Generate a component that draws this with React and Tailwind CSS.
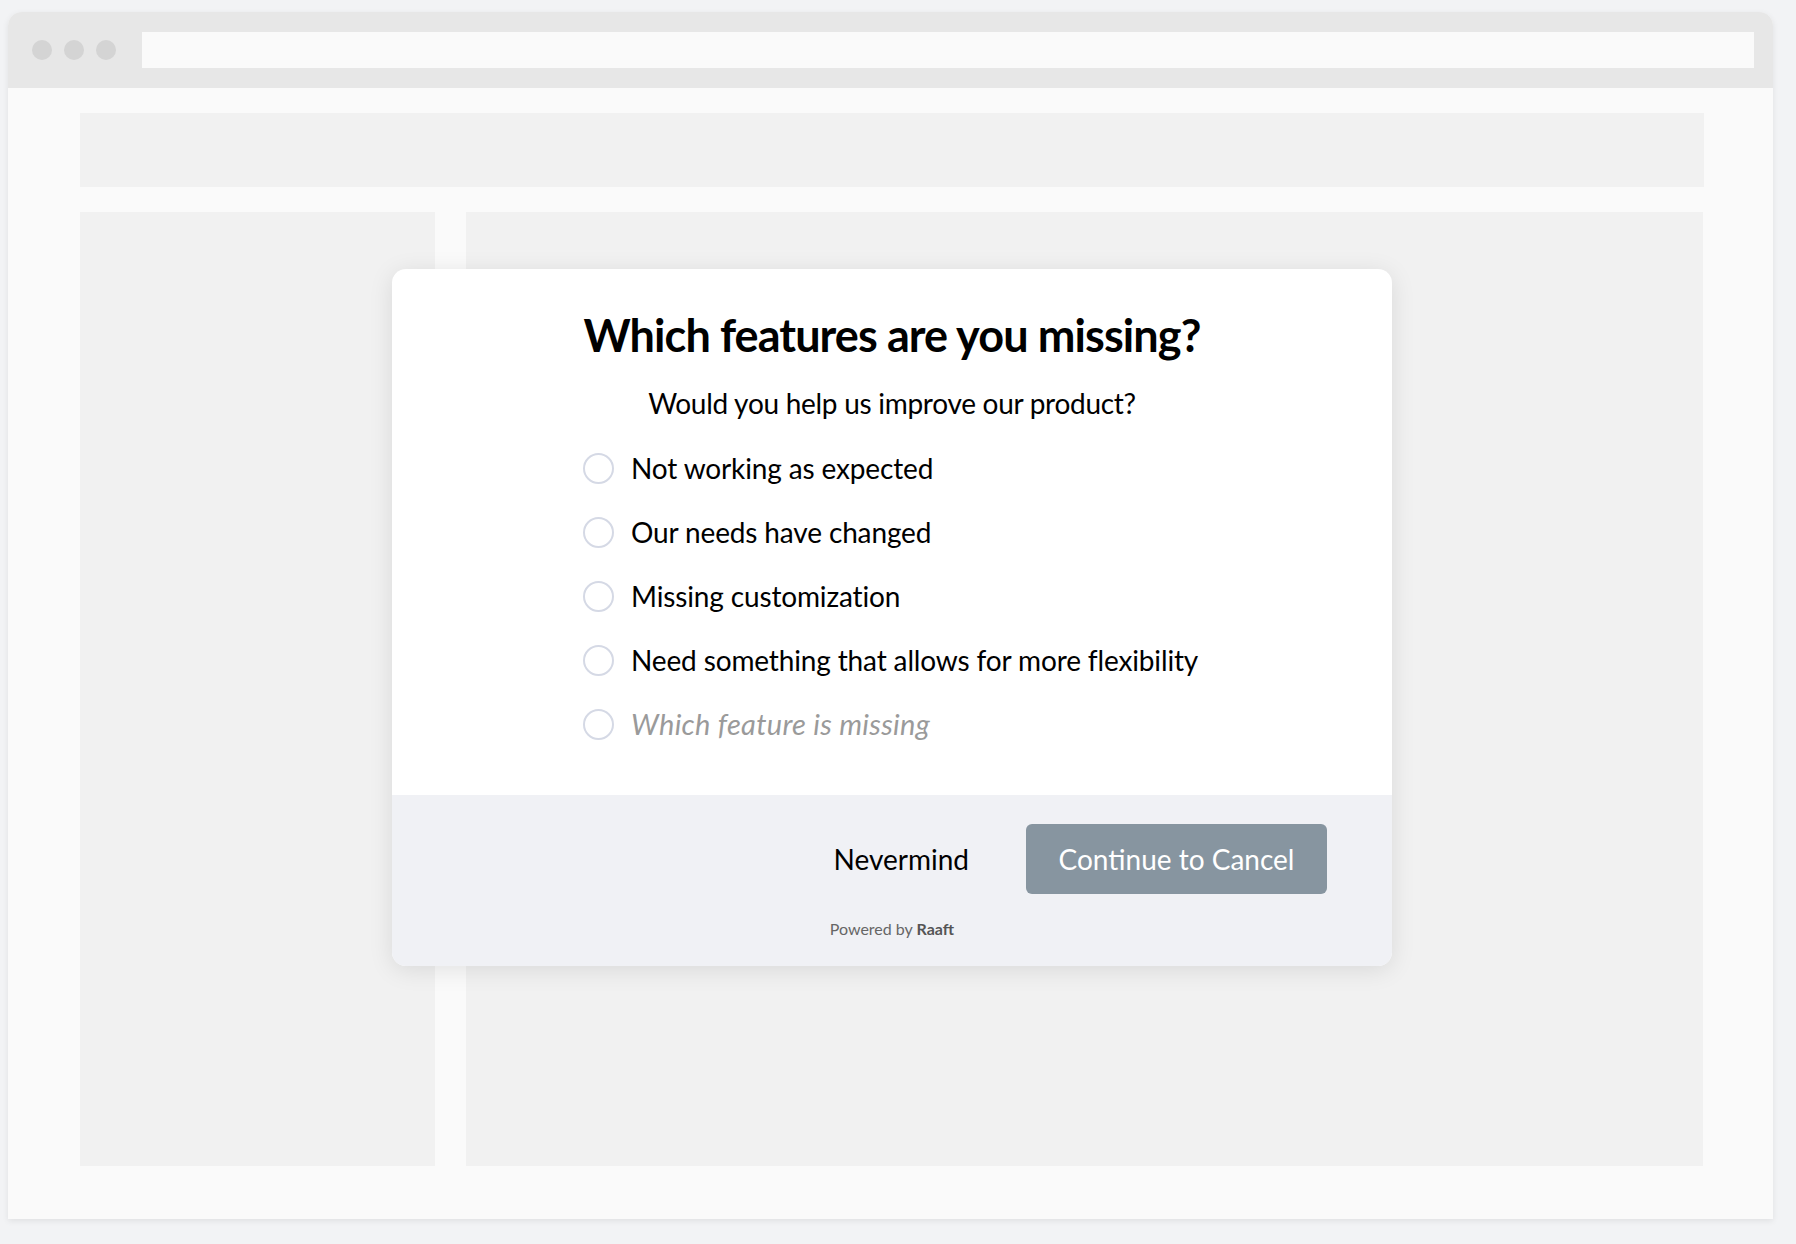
import React from 'react';

const OPTIONS = [
  'Not working as expected',
  'Our needs have changed',
  'Missing customization',
  'Need something that allows for more flexibility',
];

function Radio() {
  return <span className="w-[31px] h-[31px] rounded-full border-2 border-[#d5d9e5] bg-white shrink-0" />;
}

function CancelModal() {
  return (
    <div className="absolute left-[392px] top-[269px] w-[1000px] bg-white rounded-[14px] shadow-[0_4px_24px_rgba(0,0,0,0.10)] overflow-hidden">
      {/* Body */}
      <div className="pt-[38px] pb-[39px]">
        <div className="w-[618px] mx-auto">
          <h2 className="-mx-[60px] whitespace-nowrap text-[45px] leading-[56px] font-bold text-black text-center tracking-[-0.02em]">
            Which features are you missing?
          </h2>
          <p className="mt-[22px] -mx-[40px] whitespace-nowrap text-[28px] leading-[36px] text-black text-center tracking-[-0.01em]">
            Would you help us improve our product?
          </p>
          <ul className="mt-[15px]">
            {OPTIONS.map((opt) => (
              <li key={opt} className="h-[64px] flex items-center gap-[17px]">
                <Radio />
                <span className="whitespace-nowrap text-[28px] leading-[32px] text-black tracking-[-0.005em]">{opt}</span>
              </li>
            ))}
            <li className="h-[64px] flex items-center gap-[17px]">
              <Radio />
              <span className="whitespace-nowrap text-[29px] leading-[32px] italic text-[#9a9a9a] tracking-[0.01em]">Which feature is missing</span>
            </li>
          </ul>
        </div>
      </div>

      {/* Footer */}
      <div className="bg-[#f0f1f5] pt-[29px] pb-[27px]">
        <div className="flex justify-end items-center gap-[25px] pr-[65px]">
          <button className="h-[70px] px-8 text-[28px] text-black">Nevermind</button>
          <button className="h-[70px] w-[301px] rounded-[6px] bg-[#8795a0] text-white text-[28px]">
            Continue to Cancel
          </button>
        </div>
        <p className="mt-[25px] text-center text-[16px] leading-[20px] text-[#666]">
          Powered by <span className="font-bold text-[#555]">Raaft</span>
        </p>
      </div>
    </div>
  );
}

export default function App() {
  return (
    <div className="relative w-[1796px] h-[1244px] bg-[#f2f3f5] pt-[12px] pl-[8px] font-['Lato','Liberation_Sans',sans-serif]">
      {/* Browser window */}
      <div className="w-[1765px] h-[1207px] rounded-t-[14px] overflow-hidden bg-[#fafafa] shadow-[0_2px_6px_rgba(0,0,0,0.08)] flex flex-col">
        <div className="h-[76px] bg-[#e7e7e7] flex items-center pl-[24px] pr-[19px]">
          <div className="flex gap-[12px]">
            <span className="w-[20px] h-[20px] rounded-full bg-[#d4d4d4]" />
            <span className="w-[20px] h-[20px] rounded-full bg-[#d4d4d4]" />
            <span className="w-[20px] h-[20px] rounded-full bg-[#d4d4d4]" />
          </div>
          <div className="ml-[26px] flex-1 h-[36px] bg-[#fafafa]" />
        </div>
        <div className="flex-1 pl-[72px] pr-[69px] pt-[25px] pb-[53px] flex flex-col gap-[25px]">
          <div className="h-[74px] bg-[#f1f1f1]" />
          <div className="flex-1 flex gap-[31px]">
            <div className="w-[355px] bg-[#f1f1f1]" />
            <div className="flex-1 bg-[#f1f1f1] mr-[1px]" />
          </div>
        </div>
      </div>
      <CancelModal />
    </div>
  );
}
